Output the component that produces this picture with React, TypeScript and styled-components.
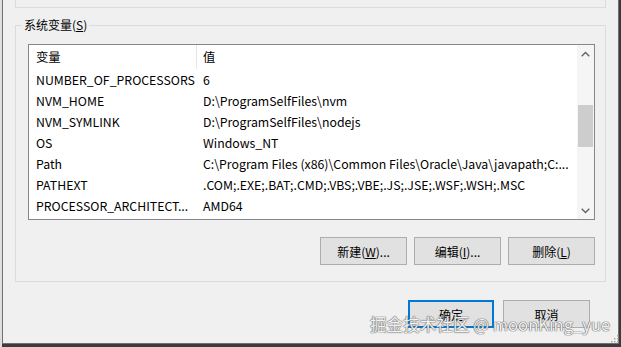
import React from "react";
import styled, { createGlobalStyle } from "styled-components";

const Global = createGlobalStyle`
  html, body { margin: 0; padding: 0; background: #3a3a3a; }
  body { font-family: "Noto Sans CJK SC", "Noto Sans", sans-serif; }
`;

const Frame = styled.div`
  position: relative;
  width: 621px;
  height: 347px;
  box-sizing: border-box;
  border-left: 2px solid #dedede;
  background: #3b3b3b;
  overflow: hidden;
`;

const Dialog = styled.div`
  width: 617px;
  height: 344px;
  box-sizing: border-box;
  background: #f0f0f0;
  border-left: 1px solid #707070;
  border-right: 1px solid #707070;
  border-bottom: 1px solid #707070;
  padding-left: 12px;
  display: flex;
  flex-direction: column;
  font-size: 12px;
  color: #000;
`;

const TopBox = styled.div`
  width: 591px;
  height: 8px;
  box-sizing: border-box;
  border: 1px solid #dcdcdc;
  border-top: none;
`;

const Group = styled.fieldset`
  margin: 9px 0 0 0;
  width: 591px;
  box-sizing: border-box;
  border: 1px solid #dcdcdc;
  padding: 11px 10px 16px 6px;
  min-inline-size: 0;
`;

const Legend = styled.legend`
  padding: 0 2px;
  font-size: 12px;
  line-height: 16px;
`;

const ListBox = styled.div`
  margin-left: 6px;
  width: 567px;
  height: 176px;
  box-sizing: border-box;
  border: 1px solid #828790;
  background: #fff;
  display: flex;
`;

const Table = styled.div`
  flex: 1;
  display: flex;
  flex-direction: column;
  overflow: hidden;
  font-size: 12.3px;
`;

const Row = styled.div<{ $header?: boolean }>`
  display: grid;
  grid-template-columns: 168px 1fr;
  height: ${(p) => (p.$header ? 24 : 21)}px;
  align-items: center;
  white-space: nowrap;
`;

const NameCell = styled.div<{ $header?: boolean }>`
  padding-left: 7px;
  height: 100%;
  display: flex;
  align-items: center;
  box-sizing: border-box;
  border-right: 1px solid ${(p) => (p.$header ? "#e5e5e5" : "transparent")};
  overflow: hidden;
`;

const ValueCell = styled.div`
  padding-left: 6px;
  overflow: hidden;
`;

const ScrollBar = styled.div`
  width: 17px;
  background: #f5f5f5;
  display: flex;
  flex-direction: column;
  align-items: center;
`;

const Arrow = styled.div`
  height: 17px;
  width: 17px;
  display: flex;
  align-items: center;
  justify-content: center;
`;

const Track = styled.div`
  flex: 1;
  width: 15px;
  display: flex;
  flex-direction: column;
`;

const Thumb = styled.div`
  margin-top: 43px;
  height: 42px;
  background: #cdcdcd;
`;

const ButtonRow = styled.div`
  display: flex;
  justify-content: flex-end;
  gap: 7px;
  margin-top: 17px;
`;

const Button = styled.button<{ $default?: boolean; $w: number }>`
  width: ${(p) => p.$w}px;
  height: 28px;
  box-sizing: border-box;
  background: #e1e1e1;
  border: 1px solid ${(p) => (p.$default ? "#0078d7" : "#adadad")};
  box-shadow: ${(p) => (p.$default ? "inset 0 0 0 1px #0078d7" : "none")};
  font-family: "Noto Sans CJK SC", "Noto Sans", sans-serif;
  font-size: 12px;
  color: #000;
  padding: 0;
  display: flex;
  align-items: center;
  justify-content: center;
`;

const FooterRow = styled.div`
  display: flex;
  justify-content: flex-end;
  gap: 9px;
  margin-top: 18px;
  padding-right: 28px;
`;

const Watermark = styled.div`
  position: absolute;
  left: 368px;
  top: 312px;
  font-family: "Noto Sans CJK SC", "Noto Sans", sans-serif;
  font-size: 16.6px;
  line-height: 24px;
  color: rgba(250, 250, 250, 0.94);
  white-space: nowrap;
  text-shadow: 0 0 1px #6a6a6a, 0 0 1px #6a6a6a, 0 0 1px #6a6a6a;
  pointer-events: none;
`;

const Grip = styled.svg`
  position: absolute;
  left: 609px;
  top: 335px;
`;

const rows: [string, string][] = [
  ["NUMBER_OF_PROCESSORS", "6"],
  ["NVM_HOME", "D:\\ProgramSelfFiles\\nvm"],
  ["NVM_SYMLINK", "D:\\ProgramSelfFiles\\nodejs"],
  ["OS", "Windows_NT"],
  ["Path", "C:\\Program Files (x86)\\Common Files\\Oracle\\Java\\javapath;C:..."],
  ["PATHEXT", ".COM;.EXE;.BAT;.CMD;.VBS;.VBE;.JS;.JSE;.WSF;.WSH;.MSC"],
  ["PROCESSOR_ARCHITECT...", "AMD64"],
];

export default function App() {
  return (
    <>
      <Global />
      <Frame>
        <Dialog>
          <TopBox />
          <Group>
            <Legend>
              系统变量(<u>S</u>)
            </Legend>
            <ListBox>
              <Table>
                <Row $header>
                  <NameCell $header>变量</NameCell>
                  <ValueCell>值</ValueCell>
                </Row>
                {rows.map(([n, v]) => (
                  <Row key={n}>
                    <NameCell>{n}</NameCell>
                    <ValueCell>{v}</ValueCell>
                  </Row>
                ))}
              </Table>
              <ScrollBar>
                <Arrow>
                  <svg width="9" height="6" viewBox="0 0 9 6">
                    <path d="M0.7 5.3 L4.5 1.5 L8.3 5.3" fill="none" stroke="#606060" strokeWidth="1.3" />
                  </svg>
                </Arrow>
                <Track>
                  <Thumb />
                </Track>
                <Arrow>
                  <svg width="9" height="6" viewBox="0 0 9 6">
                    <path d="M0.7 0.7 L4.5 4.5 L8.3 0.7" fill="none" stroke="#606060" strokeWidth="1.3" />
                  </svg>
                </Arrow>
              </ScrollBar>
            </ListBox>
            <ButtonRow>
              <Button $w={87}>
                新建(<u>W</u>)...
              </Button>
              <Button $w={87}>
                编辑(<u>I</u>)...
              </Button>
              <Button $w={87}>
                删除(<u>L</u>)
              </Button>
            </ButtonRow>
          </Group>
          <FooterRow>
            <Button $w={86} $default>
              确定
            </Button>
            <Button $w={87}>取消</Button>
          </FooterRow>
        </Dialog>
        <Watermark>掘金技术社区 @ moonKing_yue</Watermark>
        <Grip width="8" height="8" viewBox="0 0 8 8">
          <rect x="6" y="0" width="1.5" height="1.5" fill="#a8a8a8" />
          <rect x="3" y="3" width="1.5" height="1.5" fill="#a8a8a8" />
          <rect x="6" y="3" width="1.5" height="1.5" fill="#a8a8a8" />
          <rect x="0" y="6" width="1.5" height="1.5" fill="#a8a8a8" />
          <rect x="3" y="6" width="1.5" height="1.5" fill="#a8a8a8" />
          <rect x="6" y="6" width="1.5" height="1.5" fill="#a8a8a8" />
        </Grip>
      </Frame>
    </>
  );
}
